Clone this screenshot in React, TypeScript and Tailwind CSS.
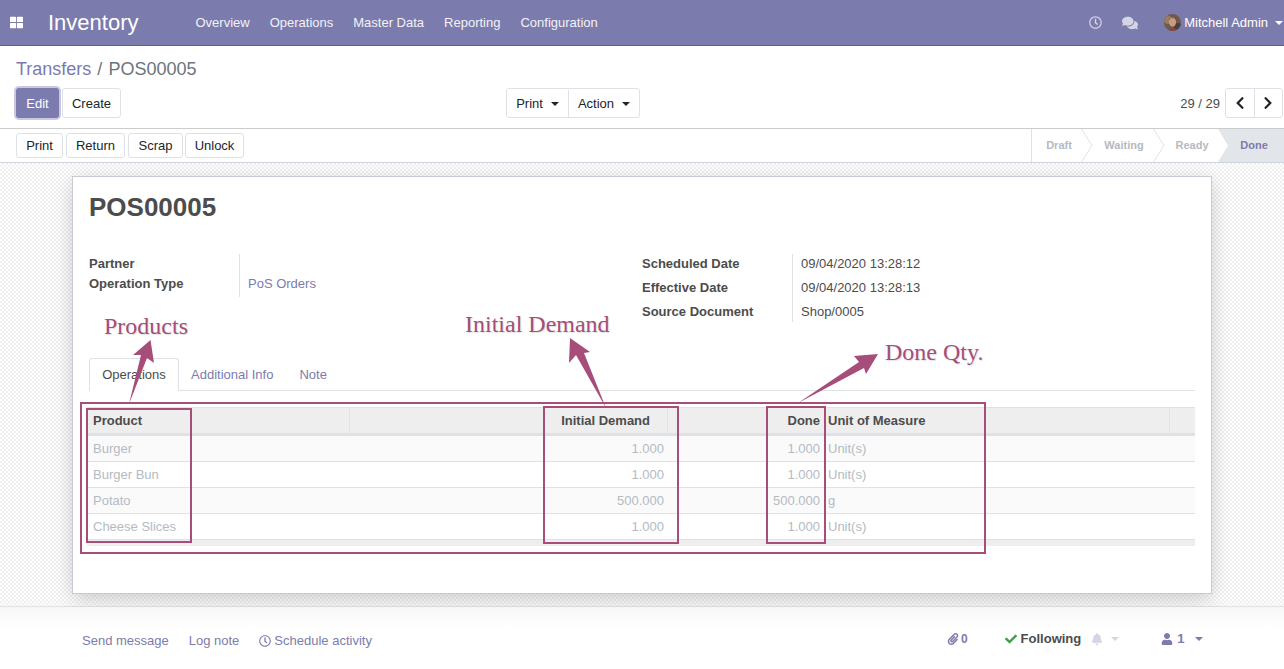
import { FaThLarge, FaRegClock, FaComments, FaChevronLeft, FaChevronRight, FaPaperclip, FaCheck, FaBell, FaUser } from "react-icons/fa";

var MENU = ["Overview", "Operations", "Master Data", "Reporting", "Configuration"];

var ROWS = [
  { product: "Burger", demand: "1.000", done: "1.000", uom: "Unit(s)" },
  { product: "Burger Bun", demand: "1.000", done: "1.000", uom: "Unit(s)" },
  { product: "Potato", demand: "500.000", done: "500.000", uom: "g" },
  { product: "Cheese Slices", demand: "1.000", done: "1.000", uom: "Unit(s)" },
];

function Caret({ className }: { className: string }) {
  return <span className={"inline-block w-0 h-0 border-x-4 border-x-transparent border-t-4 " + className} />;
}

function Btn({ label, className }: { label: string; className: string }) {
  return (
    <button className={"flex items-center justify-center bg-white border border-[#dee2e6] rounded-[3px] text-[13px] text-[#212529] " + className}>
      {label}
    </button>
  );
}

function Avatar() {
  return (
    <svg width="17" height="17" viewBox="0 0 17 17" className="rounded-full">
      <rect width="17" height="17" fill="#6d5a4c" />
      <circle cx="4" cy="6" r="4" fill="#9a7d5c" />
      <circle cx="14" cy="13" r="4" fill="#4d4038" />
      <ellipse cx="8.5" cy="8" rx="3.6" ry="4.6" fill="#c99a80" />
      <path d="M4.5 6 Q8.5 1.5 12.5 6 L11.5 4.5 Q8.5 3.5 5.5 4.5 Z" fill="#33261f" />
      <path d="M3 17 Q8.5 11 14 17 Z" fill="#8e3f3a" />
    </svg>
  );
}

function StatusStep({ label, className, active }: { label: string; className: string; active?: boolean }) {
  return (
    <div className={"relative flex items-center justify-center text-[11px] font-bold " + (active ? "text-[#7c7bad] " : "text-[#b4bac2] ") + className}>
      {label}
    </div>
  );
}

function Chevron({ className }: { className: string }) {
  return (
    <svg width="12" height="33" viewBox="0 0 12 33" fill="none" className={"absolute top-0 " + className}>
      <path d="M0.5 0 L11 16.5 L0.5 33" stroke="#dee2e6" />
    </svg>
  );
}

function Annotations() {
  return (
    <>
      <div className="absolute left-[80px] top-[402px] w-[906px] h-[152px] border-2 border-[#a64d79]" />
      <div className="absolute left-[86px] top-[408px] w-[106px] h-[135px] border-2 border-[#a64d79]" />
      <div className="absolute left-[543px] top-[406px] w-[136px] h-[138px] border-2 border-[#a64d79]" />
      <div className="absolute left-[766px] top-[406px] w-[60px] h-[138px] border-2 border-[#a64d79]" />
      <svg width="1284" height="669" viewBox="0 0 1284 669" className="absolute left-0 top-0 pointer-events-none">
        <polygon points="150.5,340 154,363 147,358 129,404 141,355 133,355" fill="#a64d79" />
        <polygon points="570,338 569,363 576,355 606,408 584,353 590,352" fill="#a64d79" />
        <polygon points="878,354 854,356 859,362 798,403 864,368 866,374" fill="#a64d79" />
      </svg>
      <div className="absolute left-[104px] top-[312px] text-[24px] leading-[28px] text-[#a64d79] font-[Liberation_Serif,serif] [text-shadow:1px_1px_1px_rgba(0,0,0,0.12)]">Products</div>
      <div className="absolute left-[465px] top-[310px] text-[24px] leading-[28px] text-[#a64d79] font-[Liberation_Serif,serif] [text-shadow:1px_1px_1px_rgba(0,0,0,0.12)]">Initial Demand</div>
      <div className="absolute left-[885px] top-[338px] text-[24px] leading-[28px] text-[#a64d79] font-[Liberation_Serif,serif] [text-shadow:1px_1px_1px_rgba(0,0,0,0.12)]">Done Qty.</div>
    </>
  );
}

function Table() {
  return (
    <div className="ml-[-2px] w-[1108px] mt-[16px] text-[13px]">
      <div className="grid grid-cols-[263px_318px_157px_345px_25px] h-[29px] bg-[#eeeeee] border-t border-[#dee2e6] border-b-[3px] border-b-[#dee2e6] font-bold text-[#4c4c4c] leading-[25px]">
        <div className="pl-[6px] border-r border-[#e2e2e2]">Product</div>
        <div className="pr-[17px] text-right border-r border-[#e2e2e2]">Initial Demand</div>
        <div className="pr-[5px] text-right">Done</div>
        <div className="pl-[3px] border-r border-[#e2e2e2]">Unit of Measure</div>
        <div />
      </div>
      {ROWS.map(function (row, i) {
        return (
          <div
            key={row.product}
            className={"grid grid-cols-[263px_318px_157px_345px_25px] h-[26px] border-b border-[#dee2e6] text-[#b4bac2] leading-[25px] " + (i % 2 === 0 ? "bg-[#fafafa]" : "bg-white")}
          >
            <div className="pl-[6px]">{row.product}</div>
            <div className="pr-[4px] text-right">{row.demand}</div>
            <div className="pr-[5px] text-right">{row.done}</div>
            <div className="pl-[3px]">{row.uom}</div>
            <div />
          </div>
        );
      })}
      <div className="h-[6px] bg-[#eeeeee]" />
    </div>
  );
}

export default function App() {
  return (
    <div className="relative w-[1284px] h-[669px] overflow-hidden flex flex-col bg-white font-[Liberation_Sans,Arial,sans-serif] text-[13px] text-[#4c4c4c]">
      <header className="h-[46px] shrink-0 flex items-center bg-[#7c7bad] border-b border-[#5f5e97] text-white">
        <FaThLarge size={13} className="ml-[10px]" />
        <div className="ml-[25px] text-[22px] leading-none">Inventory</div>
        <nav className="ml-[57px] flex gap-[20px] text-[13px] text-[#f2f2f7]">
          {MENU.map(function (item) {
            return <span key={item}>{item}</span>;
          })}
        </nav>
        <div className="ml-auto flex items-center">
          <FaRegClock size={13} className="text-[#d4d4e5]" />
          <FaComments size={16} className="ml-[20px] text-[#d4d4e5]" />
          <div className="ml-[26px]"><Avatar /></div>
          <span className="ml-[3px]">Mitchell Admin</span>
          <Caret className="ml-[7px] mr-[1px] border-t-white" />
        </div>
      </header>

      <div className="h-[83px] shrink-0 px-[16px] border-b border-[#cccccc]">
        <div className="h-[42px] pt-[10px] text-[18px] leading-[26px]">
          <span className="text-[#7c7bad]">Transfers</span>
          <span className="mx-[6px] text-[#6c757d]">/</span>
          <span className="text-[#6c757d]">POS00005</span>
        </div>
        <div className="flex items-center">
          <button className="w-[43px] h-[30px] pt-[1px] rounded-[3px] bg-[#7c7bad] text-white text-[13px] ring-2 ring-[#c9c8de]">Edit</button>
          <Btn label="Create" className="ml-[3px] w-[59px] h-[30px] pt-[1px]" />
          <div className="ml-[385px] w-[134px] h-[30px] pt-[1px] flex border border-[#dee2e6] rounded-[3px] text-[13px] text-[#212529]">
            <div className="w-[62px] flex items-center justify-center gap-[8px] border-r border-[#dee2e6]">
              Print <Caret className="border-t-[#212529]" />
            </div>
            <div className="flex-1 flex items-center justify-center gap-[8px]">
              Action <Caret className="border-t-[#212529]" />
            </div>
          </div>
          <div className="ml-auto mr-[-16px] flex items-center">
            <span className="pt-[1px] text-[#4c4c4c]">29 / 29</span>
            <div className="ml-[5px] mr-[1px] w-[58px] h-[30px] flex border border-[#dee2e6] rounded-[3px] text-[#212529]">
              <div className="flex-1 flex items-center justify-center border-r border-[#dee2e6]"><FaChevronLeft size={14} /></div>
              <div className="flex-1 flex items-center justify-center"><FaChevronRight size={14} /></div>
            </div>
          </div>
        </div>
      </div>

      <div className="h-[34px] shrink-0 flex items-center pl-[16px] border-b border-[#ced4da] bg-white">
        <div className="flex gap-[3px]">
          <Btn label="Print" className="w-[47px] h-[25px]" />
          <Btn label="Return" className="w-[59px] h-[25px]" />
          <Btn label="Scrap" className="w-[55px] h-[25px]" />
          <Btn label="Unlock" className="w-[59px] h-[25px] ml-[-1px]" />
        </div>
        <div className="relative ml-auto h-full flex border-l border-[#dee2e6]">
          <StatusStep label="Draft" className="w-[50px] pl-[4px]" />
          <Chevron className="left-[49px]" />
          <StatusStep label="Waiting" className="w-[72px] pl-[12px]" />
          <Chevron className="left-[121px]" />
          <StatusStep label="Ready" className="w-[64px] pl-[12px]" />
          <StatusStep label="Done" active className="w-[66px] pl-[6px] bg-[#e2e5ea] [clip-path:polygon(0_0,100%_0,100%_100%,0_100%,10px_50%)]" />
        </div>
      </div>

      <main className="h-[444px] shrink-0 border-b border-[#e2e2e2] bg-[repeating-conic-gradient(#efefef_0_25%,#ffffff_0_50%)] bg-[length:4px_4px] pt-[13px] pl-[72px]">
        <div className="w-[1140px] h-[418px] bg-white border border-[#c9c9d3] shadow-[0_5px_20px_-1px_rgba(0,0,0,0.2)] pl-[16px] pr-[16px]">
          <h1 className="mt-[14px] text-[26px] leading-[32px] font-bold text-[#4c4c4c]">POS00005</h1>

          <div className="mt-[31px] flex h-[72px]">
            <div className="w-[553px] flex items-start">
              <div className="w-[151px] h-[43px] border-r border-[#dee2e6] font-bold leading-[20px]">
                <div>Partner</div>
                <div>Operation Type</div>
              </div>
              <div className="pl-[8px] pt-[20px] leading-[20px] text-[#7c7bad]">PoS Orders</div>
            </div>
            <div className="flex items-start">
              <div className="w-[151px] h-[68px] border-r border-[#dee2e6] font-bold leading-[20px] flex flex-col gap-[4px]">
                <div>Scheduled Date</div>
                <div>Effective Date</div>
                <div>Source Document</div>
              </div>
              <div className="pl-[8px] leading-[20px] flex flex-col gap-[4px] text-[#4c4c4c]">
                <div>09/04/2020 13:28:12</div>
                <div>09/04/2020 13:28:13</div>
                <div>Shop/0005</div>
              </div>
            </div>
          </div>

          <div className="mt-[32px] w-[1106px] h-[33px] flex border-b border-[#dee2e6] leading-[32px] text-[#7c7bad]">
            <div className="w-[90px] h-[33px] text-center bg-white border border-b-0 border-[#dee2e6] rounded-t-[3px] text-[#4c4c4c]">Operations</div>
            <div className="ml-[12px] pt-[1px]">Additional Info</div>
            <div className="ml-[26px] pt-[1px]">Note</div>
          </div>

          <Table />
        </div>
      </main>

      <footer className="flex-1 flex items-start pt-[26px] pl-[82px] bg-[linear-gradient(#f7f7f7,#ffffff_22px)] text-[#7c7bad] leading-[16px]">
        <span>Send message</span>
        <span className="ml-[20px]">Log note</span>
        <span className="ml-[20px] flex items-center gap-[3px]"><FaRegClock size={12} /> Schedule activity</span>
        <div className="ml-[575px] mt-[-2px] flex items-center font-bold">
          <FaPaperclip size={12} />
          <span className="ml-[2px] text-[12px]">0</span>
          <FaCheck size={12} className="ml-[37px] text-[#43a047]" />
          <span className="ml-[4px] text-[#4c4c4c]">Following</span>
          <FaBell size={12} className="ml-[10px] text-[#d4d4e5]" />
          <Caret className="ml-[8px] border-t-[#d4d4e5]" />
          <FaUser size={12} className="ml-[42px]" />
          <span className="ml-[4px] text-[13px]">1</span>
          <Caret className="ml-[11px] border-t-[#7c7bad]" />
        </div>
      </footer>

      <Annotations />
    </div>
  );
}
